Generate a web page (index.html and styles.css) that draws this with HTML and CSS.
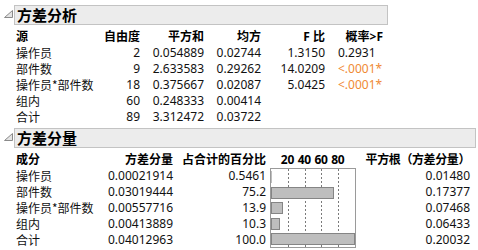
FILE: index.html
```html
<!DOCTYPE html>
<html lang="zh">
<head>
<meta charset="utf-8">
<link rel="stylesheet" href="styles.css">
</head>
<body>
<section class="outline o1">
  <div class="head">
    <svg class="toggle" width="14" height="20" viewBox="0 0 14 20"><polygon points="12.5,5.5 4.5,12.5 12.5,12.5" fill="#e4e4e4" stroke="#8a8a8a" stroke-width="1"/></svg>
    <div class="bar">方差分析</div>
  </div>
  <div class="grid anova">
    <div class="h l">源</div><div class="h">自由度</div><div class="h">平方和</div><div class="h">均方</div><div class="h">F 比</div><div class="h p">概率&gt;F</div>
    <div class="l">操作员</div><div>2</div><div>0.054889</div><div>0.02744</div><div>1.3150</div><div class="pv">0.2931</div>
    <div class="l">部件数</div><div>9</div><div>2.633583</div><div>0.29262</div><div>14.0209</div><div class="pv sig">&lt;.0001*</div>
    <div class="l">操作员*部件数</div><div>18</div><div>0.375667</div><div>0.02087</div><div>5.0425</div><div class="pv sig">&lt;.0001*</div>
    <div class="l">组内</div><div>60</div><div>0.248333</div><div>0.00414</div><div></div><div class="pv"></div>
    <div class="l">合计</div><div>89</div><div>3.312472</div><div>0.03722</div><div></div><div class="pv"></div>
  </div>
</section>
<section class="outline o2">
  <div class="head">
    <svg class="toggle" width="14" height="20" viewBox="0 0 14 20"><polygon points="12.5,5.5 4.5,12.5 12.5,12.5" fill="#e4e4e4" stroke="#8a8a8a" stroke-width="1"/></svg>
    <div class="bar">方差分量</div>
  </div>
  <div class="grid vc">
    <div class="h l">成分</div><div class="h">方差分量</div><div class="h">占合计的百分比</div><div></div>
    <div class="h ticks"><span>20</span><span>40</span><span>60</span><span>80</span></div>
    <div class="h sq">平方根（方差分量）</div>
    <div class="l r2">操作员</div><div class="r2">0.00021914</div><div class="r2">0.5461</div><div class="r2 c4"></div><div class="r2 c6">0.01480</div>
    <div class="l r3">部件数</div><div class="r3">0.03019444</div><div class="r3">75.2</div><div class="r3 c4"></div><div class="r3 c6">0.17377</div>
    <div class="l r4">操作员*部件数</div><div class="r4">0.00557716</div><div class="r4">13.9</div><div class="r4 c4"></div><div class="r4 c6">0.07468</div>
    <div class="l r5">组内</div><div class="r5">0.00413889</div><div class="r5">10.3</div><div class="r5 c4"></div><div class="r5 c6">0.06433</div>
    <div class="l r6">合计</div><div class="r6">0.04012963</div><div class="r6">100.0</div><div class="r6 c4"></div><div class="r6 c6">0.20032</div>
    <div class="chart">
      <i class="grid-line g1"></i><i class="grid-line g2"></i><i class="grid-line g3"></i><i class="grid-line g4"></i>
      <div class="slot"><div class="fill" style="width:0.5461%"></div></div>
      <div class="slot"><div class="fill" style="width:75.2%"></div></div>
      <div class="slot"><div class="fill" style="width:13.9%"></div></div>
      <div class="slot"><div class="fill" style="width:10.3%"></div></div>
      <div class="slot"><div class="fill" style="width:100%"></div></div>
    </div>
  </div>
</section>
</body>
</html>
```
FILE: styles.css
```css
* { box-sizing: border-box; }
body {
  margin: 0;
  background: #fff;
  color: #111;
  font-family: "Noto Sans", "Noto Sans CJK SC", sans-serif;
  font-size: 12px;
}
.outline.o1 { padding-top: 5px; }
.outline.o2 { padding-top: 3px; }
.head { display: flex; align-items: flex-start; }
.toggle { display: block; flex: none; }
.bar {
  height: 20px;
  border: 1px solid #c3c3c3;
  background: #ececec;
  font-family: "Noto Sans CJK SC", sans-serif;
  font-weight: bold;
  font-size: 15px;
  line-height: 18px;
  padding-left: 2px;
  color: #000;
}
.o1 .bar { width: 374px; }
.o2 .bar { width: 462px; }

.grid {
  display: grid;
  margin-left: 16px;
  margin-top: 4px;
  grid-auto-rows: 16px;
  line-height: 16px;
  white-space: nowrap;
}
.grid > div { text-align: right; }
.grid > .l { text-align: left; font-family: "Noto Sans CJK SC", sans-serif; }
.grid > .h { font-weight: bold; font-family: "Noto Sans", "Noto Sans CJK SC", sans-serif; color: #000; }

.anova { grid-template-columns: 84px 40px 64px 57px 64px 63px; }
.anova > .p { padding-right: 5px; }
.anova > .pv { text-align: left; padding-left: 13px; }
.anova > .sig { color: #f08a34; }

.vc {
  grid-template-columns: 84px 73px 93px 4px 86px 114px;
}
.vc > .sq { letter-spacing: -0.4px; }
.vc > .c4 { grid-column: 5; }
.vc > .c6 { grid-column: 6; }
.vc > .r2 { grid-row: 2; }
.vc > .r3 { grid-row: 3; }
.vc > .r4 { grid-row: 4; }
.vc > .r5 { grid-row: 5; }
.vc > .r6 { grid-row: 6; }
.vc > .ticks {
  grid-column: 5;
  grid-row: 1;
  display: flex;
  padding-left: 9px;
  letter-spacing: -0.3px;
}
.ticks span { width: 16.8px; text-align: center; flex: none; }

.chart {
  grid-column: 5;
  grid-row: 2 / span 5;
  border: 1px solid #9a9a9a;
  position: relative;
  display: flex;
  flex-direction: column;
  background: #fff;
}
.grid-line {
  position: absolute;
  top: 0;
  bottom: 0;
  width: 1px;
  background: repeating-linear-gradient(to bottom, #7a7a7a 0 2px, transparent 2px 4px);
}
.g1 { left: 20%; }
.g2 { left: 40%; }
.g3 { left: 60%; }
.g4 { left: 80%; }
.slot { flex: 1; position: relative; padding-top: 2px; }
.fill {
  height: 12px;
  background: #bebebe;
  border: 1px solid #858585;
}
.slot:first-of-type .fill { border: 0; }
```
